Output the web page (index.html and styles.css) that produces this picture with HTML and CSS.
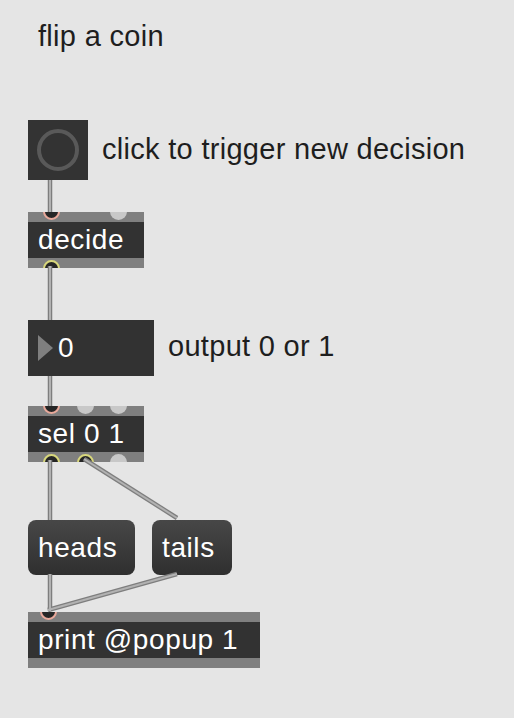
FILE: index.html
```html
<html>
  <head>
    <title>flip a coin</title>
    <link rel="stylesheet" href="styles.css">
  </head>
  <body>
    <div class="patcher">
      <svg class="cords" width="514" height="718">
        <defs>
          <g id="cord-lines">
            <line x1="50" y1="180" x2="50" y2="212"></line>
            <line x1="50" y1="266" x2="50" y2="320"></line>
            <line x1="50" y1="376" x2="50" y2="406"></line>
            <line x1="50" y1="460" x2="50" y2="520"></line>
            <line x1="84" y1="459" x2="177" y2="518"></line>
            <line x1="50" y1="574" x2="50" y2="611"></line>
            <line x1="177" y1="574" x2="48" y2="610"></line>
          </g>
        </defs>
        <use href="#cord-lines" class="cord-edge"></use>
        <use href="#cord-lines" class="cord-core"></use>
      </svg>

      <div class="comment" style="left: 38px; top: 20px;">flip a coin</div>

      <div class="bang" style="left: 28px; top: 120px;">
        <div class="bang-ring"></div>
      </div>
      <div class="comment" style="left: 102px; top: 133px;">click to trigger new decision</div>

      <div class="obj" style="left: 28px; top: 212px; width: 116px;">
        <span class="port in hot" style="left: 15px;"></span>
        <span class="port in" style="left: 82px;"></span>
        decide
        <span class="port out live" style="left: 15px;"></span>
      </div>

      <div class="numbox" style="left: 28px; top: 320px; width: 126px;">
        <span class="arrow"></span>0
      </div>
      <div class="comment" style="left: 168px; top: 330px;">output 0 or 1</div>

      <div class="obj" style="left: 28px; top: 406px; width: 116px;">
        <span class="port in hot" style="left: 15px;"></span>
        <span class="port in" style="left: 49px;"></span>
        <span class="port in" style="left: 82px;"></span>
        sel 0 1
        <span class="port out live" style="left: 15px;"></span>
        <span class="port out live" style="left: 49px;"></span>
        <span class="port out" style="left: 82px;"></span>
      </div>

      <div class="msg" style="left: 28px; top: 520px; width: 107px;">heads</div>
      <div class="msg" style="left: 152px; top: 520px; width: 80px;">tails</div>

      <div class="obj" style="left: 28px; top: 612px; width: 232px;">
        <span class="port in hot" style="left: 12px;"></span>
        print @popup 1
      </div>
    </div>
  </body>
</html>
```

FILE: styles.css
```css
body {
  margin: 0;
  padding: 0;
  background-color: #e5e5e5;
  font-family: "Liberation Sans", Arial, sans-serif;
  letter-spacing: 0.6px;
}
.patcher {
  position: relative;
  width: 514px;
  height: 718px;
  overflow: hidden;
}
.cords {
  position: absolute;
  left: 0;
  top: 0;
  z-index: 2;
}
.cord-edge {
  stroke: #7e7e7e;
  stroke-width: 4.5;
}
.cord-core {
  stroke: #b2b2b2;
  stroke-width: 2;
}
.comment {
  position: absolute;
  font-size: 29px;
  line-height: 32px;
  letter-spacing: 0.3px;
  color: #1e1e1e;
  white-space: nowrap;
}
.bang {
  position: absolute;
  width: 60px;
  height: 60px;
  background-color: #333333;
  display: flex;
  align-items: center;
  justify-content: center;
}
.bang-ring {
  width: 34px;
  height: 34px;
  border-radius: 50%;
  border: 4px solid #595959;
}
.obj {
  position: absolute;
  box-sizing: border-box;
  height: 56px;
  border-top: 10px solid #7f7f7f;
  border-bottom: 10px solid #7f7f7f;
  background-color: #323232;
  color: #ffffff;
  font-size: 28px;
  line-height: 36px;
  padding-left: 10px;
  white-space: nowrap;
}
.port {
  position: absolute;
  box-sizing: border-box;
  width: 17px;
  height: 17px;
  border-radius: 50%;
  background-color: #c8c8c8;
  z-index: 1;
}
.port.in {
  top: -19px;
  clip-path: inset(9px 0 0 0);
}
.port.out {
  bottom: -19px;
  clip-path: inset(0 0 9px 0);
}
.port.hot {
  background-color: #262626;
  border: 2px solid #e9a99b;
}
.port.live {
  background-color: #262626;
  border: 2px solid #d8d77c;
}
.numbox {
  position: absolute;
  height: 56px;
  background-color: #323232;
  color: #ffffff;
  font-size: 28px;
  display: flex;
  align-items: center;
  padding-left: 10px;
  box-sizing: border-box;
}
.arrow {
  width: 0;
  height: 0;
  border-top: 13px solid transparent;
  border-bottom: 13px solid transparent;
  border-left: 15px solid #7f7f7f;
  margin-right: 5px;
}
.msg {
  position: absolute;
  box-sizing: border-box;
  height: 55px;
  border-radius: 8px;
  background: linear-gradient(#474747, #2f2f2f);
  color: #ffffff;
  font-size: 28px;
  line-height: 55px;
  padding-left: 10px;
  white-space: nowrap;
}
```
